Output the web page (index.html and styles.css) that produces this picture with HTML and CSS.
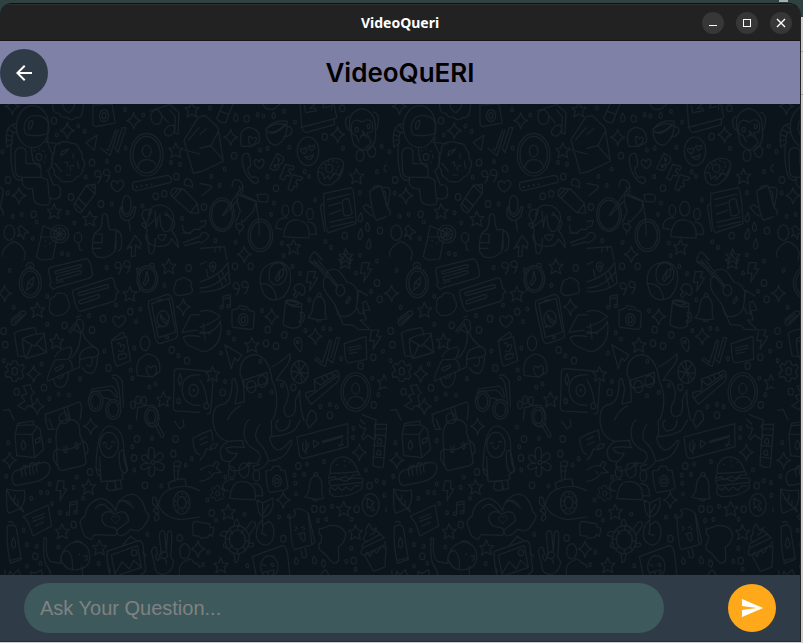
FILE: index.html
```html
<!DOCTYPE html>
<html lang="en">
<head>
<meta charset="utf-8">
<meta name="viewport" content="width=device-width, initial-scale=1">
<title>VideoQueri</title>
<link rel="stylesheet" href="styles.css">
</head>
<body>
<div class="window">
  <div class="titlebar">
    <span class="titlebar-name">VideoQueri</span>
    <div class="titlebar-controls">
      <button class="control" type="button" aria-label="Minimize"><svg width="22" height="22" viewBox="0 0 22 22" fill="none" stroke="#fff" shape-rendering="crispEdges"><path d="M7 13.5h8"/></svg></button>
      <button class="control" type="button" aria-label="Maximize"><svg width="22" height="22" viewBox="0 0 22 22" fill="none" stroke="#fff" shape-rendering="crispEdges"><path d="M7.500 7.500h7v7h-7z"/></svg></button>
      <button class="control" type="button" aria-label="Close"><svg width="22" height="22" viewBox="0 0 22 22" fill="none" stroke="#fff" stroke-width="1.400"><path d="M7 7l8 8M15 7l-8 8"/></svg></button>
    </div>
  </div>
  <header class="header">
    <button class="round back" type="button" aria-label="Back"><svg width="24" height="24" viewBox="0 0 24 24" fill="#fff"><path d="M20 11H7.830l5.590-5.590L12 4l-8 8 8 8 1.410-1.410L7.830 13H20v-2z"/></svg></button>
    <h1 class="heading">VideoQuERI</h1>
  </header>
  <main class="chat">
    <svg class="doodles" width="100%" height="100%" aria-hidden="true">
      <defs>
        <path id="star" d="M0-23L7-7 22-6 11 5 15 22 0 13-14 22-10 5-20-6-6-7Z"/>
        <path id="spark" d="M0-25Q3-5 21 0Q4 4 0 25Q-4 4-21 0Q-4-5 0-25Z"/>
        <path id="heart" d="M0 18C-27 4-20-19-7-15Q-2-13 0-8Q3-20 14-16C27-8 15 9 0 18Z"/>
        <path id="bolt" d="M-10-28L12-28 5-10 18-9-6 30-2 3-16 4Z"/>
        <g id="dot"><ellipse rx="8" ry="10"/></g>
        <g id="sdot"><ellipse rx="4" ry="6"/></g>
        <g id="note"><path d="M-8 16V-16L14-21V12M-8-8L14-13"/><ellipse cx="-13" cy="17" rx="5" ry="5"/><ellipse cx="9" cy="13" rx="5" ry="5"/></g>
        <g id="quote"><path d="M-8 18Q1 9-2-1Q-19 2-18-11Q-14-23-4-17Q9-6-8 18ZM18 14Q27 4 24-5Q8-2 8-14Q12-27 23-21Q35-9 18 14Z"/></g>
        <g id="people"><ellipse cx="0" cy="-34" rx="15" ry="22"/><ellipse cx="-37" cy="-28" rx="10" ry="17"/><ellipse cx="37" cy="-18" rx="10" ry="17"/><path d="M-42 50Q-38-5 0 0Q39 5 34 54Q-3 54-42 50ZM-46 28L-66 24Q-63-10-30-6M36 42L56 43Q56 5 29 6"/></g>
        <g id="person"><ellipse rx="49" ry="64"/><ellipse rx="41" ry="55"/><ellipse cy="-11" rx="13" ry="18"/><path d="M-27 39Q-23 15 0 15Q22 15 28 32"/></g>
        <g id="camera"><path d="M-34-24L-17-28-11-37 12-33 17-23 30-20Q34-18 33-10L30 29Q29 35 20 34L-29 28Q-35 27-34 18Z"/><ellipse cy="5" rx="14" ry="18"/><ellipse cy="5" rx="6" ry="9"/><path d="M-8-27L8-25"/></g>
        <g id="bell"><path d="M-32 31Q-18 19-18-3Q-15-31 2-33Q20-28 20 0Q18 22 24 35Q-3 41-32 31ZM-5-34Q-4-43 3-43Q9-40 7-32M-9 37Q1 49 9 38"/></g>
        <g id="gear"><path d="M-5-31H6L8-21 16-17 24-22 29-10 22-3 23 7 27 15 19 24 10 20 4 30-8 29-10 19-18 16-26 18-29 6-20 0-21-9-27-14-20-24-12-19Z"/><ellipse rx="8" ry="11"/></g>
        <pattern id="wallpaper" width="1161" height="1413" patternUnits="userSpaceOnUse" patternTransform="scale(.33333)">
          <g fill="none" stroke="#18222a" stroke-width="3.500" stroke-linejoin="round" stroke-linecap="round">
            <g transform="translate(0 -12)">
              <ellipse cx="98" cy="80" rx="49" ry="63"/><path d="M78 104C64 76 79 43 112 47Q141 50 145 72L143 101Q112 111 78 104ZM87 88Q82 64 98 61Q101 72 90 88"/>
              <path d="M50 71Q10 72 21 142L37 129Q33 91 51 97M34 131Q29 187 41 226Q55 249 66 237M22 105L34 109M21 121L36 120M26 89L40 97M37 75L46 86"/>
              <path d="M70 144Q43 138 45 171L47 218Q49 232 68 232H123V204L118 191H78V159Q79 148 70 144M95 141Q92 189 123 204M145 112Q136 126 159 163Q157 211 143 211L160 255Q184 250 182 281Q180 303 150 294M67 235V252Q75 268 97 266L102 301Q111 320 145 314Q154 305 147 289L143 240L123 231"/>
              <ellipse cx="117" cy="171" rx="8" ry="10"/><g stroke-dasharray="3 12"><ellipse cx="117" cy="171" rx="20" ry="25"/></g>
              <path d="M174 130Q195 120 215 130Q234 129 237 147Q249 158 246 174Q260 190 250 204Q247 226 230 231Q220 248 200 245Q184 249 179 235Q160 229 163 210Q151 199 157 184Q151 167 163 159Q161 139 174 130M135 126L180 132M185 154L206 147 195 159 183 167ZM165 190L184 214M199 225H212M195 188Q205 182 203 199M219 161L220 174M212 211Q206 193 222 198M232 184L236 205"/>
              <path d="M158 14Q157 42 178 40Q183 55 199 51Q214 67 227 52Q244 57 248 35L251 12M188 12Q191 32 207 38Q222 27 224 12M279 15L336 12 346 69 288 80Q278 79 279 67Z"/><ellipse cx="312" cy="47" rx="14" ry="18"/><ellipse cx="312" cy="47" rx="6" ry="9"/>
              <path d="M291 105L258 128 283 151ZM303 145L330 167 354 90M318 148L325 151 347 90M344 142L354 157 378 83 367 83 349 139"/>
              <use href="#person" x="440" y="164"/><use href="#quote" x="302" y="231"/><use href="#heart" x="352" y="258"/>
              <path d="M399 247L503 226Q518 230 512 247L408 273Q393 267 399 247Z"/><path stroke-dasharray="1 14" stroke-width="6" d="M410 261L458 252"/>
              <path d="M286 253L259 256 222 313Q223 333 242 339L286 280ZM259 256L284 281M235 294L259 318M226 310L247 334M272 255L285 267"/>
              <ellipse cx="380" cy="314" rx="13" ry="28"/><path d="M364 319Q355 333 362 349Q381 375 402 347L408 321 401 320Q397 348 380 350Q363 345 364 319M387 364L391 392"/>
              <path d="M450 33L514 12M452 45Q453 73 470 73Q487 73 485 45Q469 13 452 45ZM493 93Q494 110 508 108Q527 101 523 78Q506 69 493 93ZM485 46L505 68M514 18L537 38 534 102 524 99 526 51 510 30M597 50L552 120 580 220 600 215M553 150L600 162M566 119L597 83"/>
              <path d="M522 264L550 267 592 310 596 339 570 338 515 288Q508 275 522 264ZM534 267L517 287M546 267L525 292M592 311L572 337"/>
              <path d="M447 357Q442 316 480 315Q521 320 521 359Q529 376 514 393M448 329Q424 324 427 350L440 375Q426 364 425 375L442 389 437 412Q444 440 480 439Q511 439 514 416Q523 425 535 443Q536 421 517 394M441 405L448 459Q465 470 466 415M455 330L434 386 465 359M465 333L469 383 474 350M480 343Q478 380 494 395Q515 397 518 362L497 337M510 349L493 344M474 405L499 404Q492 433 474 413Z"/>
              <path d="M129 377L174 397 171 411H122ZM123 412L109 470Q115 477 126 480L158 477 171 411"/><circle cx="179" cy="402" r="27"/><circle cx="179" cy="402" r="18"/><path d="M179 382V421M161 402H198M166 389L193 415M193 389L166 415M135 422L137 424M149 431L151 429M134 438L136 440M157 423L159 424"/>
              <ellipse cx="234" cy="413" rx="11" ry="15"/><path d="M235 428L240 450H247M283 460Q274 459 279 418Q282 395 300 388Q308 370 307 347Q316 334 323 351Q324 378 330 389H349L344 455Q319 480 289 470ZM279 428H306V402H285M280 445H302M351 392Q366 397 365 423Q366 453 353 453M348 396V447"/>
              <ellipse cx="28" cy="398" rx="16" ry="23"/><path d="M8 469Q2 447 40 424Q66 430 76 459L72 480M381 447L405 406 423 429 419 446 407 435 405 468 394 470 395 438ZM548 376Q546 389 553 395Q565 406 582 388H600M550 428L600 410M554 437L600 425M547 399L573 400M0 262Q10 262 9 280L1 323Q12 330 9 345"/>
              <use href="#spark" x="37" y="19"/><use href="#spark" x="202" y="92" /><use href="#spark" x="401" y="62"/><use href="#spark" x="57" y="287"/><use href="#star" x="162" y="334"/><use href="#star" x="269" y="356"/><use href="#star" x="527" y="151"/><use href="#star" x="575" y="29"/>
              <path d="M64 376L73 387 86 397 73 400 71 418 62 404 52 410 60 396 53 385ZM559 236Q581 237 577 263Q568 256 554 255Q551 242 559 236"/>
              <use href="#dot" x="162" y="62"/><use href="#dot" x="24" y="240"/><use href="#dot" x="276" y="188"/><use href="#dot" x="354" y="206"/><use href="#dot" x="213" y="291"/><use href="#dot" x="303" y="312"/><use href="#dot" x="101" y="343"/><use href="#dot" x="467" y="289"/><use href="#dot" x="493" y="281"/><use href="#dot" x="529" y="230"/><use href="#sdot" x="254" y="94"/><use href="#sdot" x="235" y="78"/><use href="#sdot" x="170" y="105"/><use href="#sdot" x="375" y="29"/><use href="#sdot" x="430" y="45"/><use href="#sdot" x="321" y="184"/><use href="#sdot" x="257" y="231"/><use href="#sdot" x="23" y="279"/><use href="#sdot" x="65" y="343"/><use href="#sdot" x="38" y="349"/><use href="#sdot" x="203" y="338"/><use href="#sdot" x="110" y="366"/><use href="#sdot" x="223" y="369"/><use href="#sdot" x="186" y="460"/><use href="#sdot" x="204" y="463"/><use href="#sdot" x="98" y="415"/><use href="#sdot" x="427" y="318"/><use href="#sdot" x="513" y="187"/><use href="#sdot" x="540" y="193"/><use href="#sdot" x="377" y="144"/><use href="#sdot" x="335" y="312"/><use href="#sdot" x="7" y="155"/><use href="#sdot" x="546" y="355"/>
            </g>
            <g transform="translate(600 -12)">
              <path d="M0 50L16 47 54 83 70 184 0 217M0 145L32 137 68 178M54 95L32 139M0 104L20 86M69 12L50 55Q63 72 77 67L99 12M61 34L86 43M188 12Q199 35 224 26L239 12"/>
              <path d="M125 139Q112 88 147 82Q183 87 178 127L155 139ZM146 110Q153 107 157 116Q167 107 169 117Q169 128 154 138Q144 126 146 110"/>
              <path d="M198 87Q224 57 261 64Q265 116 230 136Q198 134 198 87ZM198 87Q214 118 260 72M260 80Q277 78 276 93Q271 111 252 110M203 84Q230 65 254 73Q239 95 205 98"/>
              <path d="M300 12L305 79Q309 98 320 97L403 74V58L410 52 402 12M303 82L405 56M313 17L317 38 350 32 346 24 330 26 344 12M371 12L368 24 389 19M396 12L394 29"/>
              <path d="M451 91Q438 37 485 25Q528 34 526 87Q532 132 505 149Q482 155 461 132ZM447 48Q428 58 443 88L451 91M520 36Q545 42 530 88M455 72Q466 52 486 67Q507 51 516 68Q521 84 514 96L500 99 514 128 495 145M455 72Q448 100 470 109L477 126M481 113Q484 101 492 108L487 92 501 112"/><ellipse cx="470" cy="89" rx="5" ry="7"/><ellipse cx="506" cy="79" rx="4" ry="7"/><ellipse cx="480" cy="167" rx="12" ry="17"/><ellipse cx="515" cy="155" rx="12" ry="17"/>
              <ellipse cx="324" cy="154" rx="32" ry="43"/><path d="M313 162Q294 151 305 145L311 149 318 142Q325 151 313 162ZM335 152Q320 141 329 136L335 140 342 135Q348 143 335 152ZM314 170Q328 172 340 164Q334 190 314 170"/>
              <path d="M145 161Q125 154 127 187Q136 237 168 252L176 243Q174 225 155 233Q134 204 151 199Q154 179 145 161M178 206Q154 190 166 179Q174 177 176 186Q188 169 192 186Q192 198 178 206Z"/>
              <path d="M231 160L209 204Q229 220 238 200L232 192Q251 197 251 172ZM232 173L240 178 235 185ZM222 194L230 197 225 204ZM257 193L239 235 251 241 259 225 268 229 273 218 264 214 269 206 279 210 283 200ZM278 224L264 266 275 273 282 258 289 261 293 252 287 248 292 238 303 241 309 233Z"/>
              <path d="M353 221Q354 186 400 175Q430 174 431 194Q430 229 397 251Q371 263 357 242ZM353 219Q370 210 372 237L385 227 388 239 406 219 417 226 430 201"/><ellipse cx="388" cy="205" rx="11" ry="12"/><path stroke-dasharray="4 10" d="M365 206Q387 168 418 192Q410 218 390 227"/>
              <ellipse cx="66" cy="344" rx="37" ry="50"/><ellipse cx="66" cy="344" rx="31" ry="43"/><ellipse cx="181" cy="406" rx="37" ry="49"/><ellipse cx="181" cy="406" rx="30" ry="41"/><path d="M67 345L115 276 130 259M115 276Q106 306 121 333L107 367M114 284L158 301 168 306 162 331 128 367M118 260L123 281 169 304Q168 329 175 350L178 405M70 347L109 305M97 260Q95 243 105 239Q119 238 127 253L129 277M171 284L197 282Q210 284 202 306L176 304ZM111 371Q102 378 115 390 123 399 131 381 127 370 111 371M121 392L117 403M125 369V360"/>
              <use href="#people" x="293" y="360"/>
              <path d="M371 281L454 263Q464 268 468 371L386 398Q372 392 371 281ZM371 311Q360 314 362 326L374 394M382 299L450 282M386 318L421 308M388 343L423 330M390 367L460 351M391 381L462 365M426 307Q429 296 446 296L457 340Q442 352 432 345Z"/>
              <path d="M509 272L543 257 569 346 530 361Q518 350 509 272ZM511 323Q498 307 489 322 506 343 518 349M545 264Q577 254 568 298L558 315M548 274Q560 270 557 301M516 270Q525 250 544 260"/>
              <path d="M0 250L32 257Q36 261 31 267L6 287M0 365L19 361 15 377 0 383M0 406Q13 389 25 405 28 416 2 430M0 445L73 440 81 480M45 445V456M61 440V452M329 480Q334 459 344 455L367 480M483 338Q467 363 481 366Q493 358 483 338ZM483 386Q466 414 481 418Q493 408 483 386ZM501 367Q490 391 505 394Q514 384 501 367ZM507 416Q492 443 506 447Q518 440 507 416ZM107 39Q94 61 107 66Q122 61 107 39ZM221 36Q210 54 222 56Q230 48 221 36Z"/>
              <use href="#spark" x="92" y="112"/><use href="#spark" x="413" y="104"/><use href="#spark" x="133" y="463"/><use href="#star" x="469" y="229"/><use href="#star" x="280" y="441"/><use href="#star" x="437" y="469"/>
              <use href="#dot" x="140" y="56"/><use href="#dot" x="102" y="167"/><use href="#dot" x="374" y="110"/><use href="#dot" x="228" y="265"/><use href="#dot" x="12" y="321"/><use href="#dot" x="540" y="392"/><use href="#dot" x="434" y="407"/><use href="#dot" x="427" y="25"/><use href="#sdot" x="190" y="48"/><use href="#sdot" x="173" y="44"/><use href="#sdot" x="252" y="34"/><use href="#sdot" x="285" y="66"/><use href="#sdot" x="30" y="24"/><use href="#sdot" x="180" y="150"/><use href="#sdot" x="203" y="145"/><use href="#sdot" x="268" y="142"/><use href="#sdot" x="74" y="207"/><use href="#sdot" x="34" y="229"/><use href="#sdot" x="59" y="256"/><use href="#sdot" x="202" y="230"/><use href="#sdot" x="314" y="215"/><use href="#sdot" x="327" y="229"/><use href="#sdot" x="545" y="138"/><use href="#sdot" x="531" y="215"/><use href="#sdot" x="480" y="278"/><use href="#sdot" x="345" y="300"/><use href="#sdot" x="222" y="309"/><use href="#sdot" x="213" y="343"/><use href="#sdot" x="107" y="426"/><use href="#sdot" x="246" y="429"/><use href="#sdot" x="376" y="425"/><use href="#sdot" x="393" y="442"/><use href="#sdot" x="480" y="465"/><use href="#sdot" x="46" y="422"/><use href="#sdot" x="429" y="145"/><use href="#sdot" x="251" y="467"/><use href="#dot" x="560" y="205"/>
            </g>
            <g transform="translate(0 468)">
              <ellipse cx="91" cy="69" rx="33" ry="44"/><ellipse cx="91" cy="69" rx="26" ry="36"/><path d="M79 28Q75 8 91 7Q104 9 100 26M86 25Q86 16 92 18L96 25M101 51L98 76 80 91 84 67ZM84 67L98 76M151 22L260-4Q272-1 278 43Q277 51 263 56L169 83 159 88 149 76Q149 69 154 67L146 36Q144 26 151 22ZM165 34L239 14Q247 14 243 22L167 42ZM169 51L238 32Q247 34 242 41L171 62ZM169 69L190 63"/>
              <path d="M224 89L334 53Q343 55 346 83L357 96 348 101Q351 119 340 124L240 154Q229 154 218 98Q217 91 224 89ZM236 98L320 74Q328 75 325 83L239 107Q230 104 236 98ZM239 122L295 103Q302 105 298 113L242 132Q234 129 239 122Z"/>
              <use href="#quote" x="363" y="25"/><ellipse cx="442" cy="57" rx="31" ry="40"/><ellipse cx="442" cy="57" rx="25" ry="33"/><path d="M441 33L446 58 434 76Q425 72 435 59ZM416 43Q405 33 413 23L423 30M450 16Q450 6 462 12L463 21 454 22M419 86L417 96"/>
              <path d="M159 164Q141 153 150 133Q145 113 164 110Q166 97 184 99Q203 101 202 117Q214 132 204 150Q184 174 159 164ZM524 99Q518 85 526 74Q526 58 540 58Q549 48 562 58Q579 64 573 77Q582 93 572 100L543 107Q529 108 524 99Z"/>
              <path d="M34 178L65 154Q78 149 77 162L45 195Q33 200 34 184L65 162M42 189L69 167"/>
              <path d="M43 221Q45 212 104 203L111 224M43 221L54 288 73 289M67 237Q89 224 132 219L140 277 78 296Q68 279 67 237ZM68 239L103 259 134 224M79 292L96 255M110 254L138 276"/>
              <use href="#gear" x="44" y="334"/>
              <path d="M206 214L235 177Q252 177 251 205L242 220 219 207M211 219L231 193M231 190L243 219M230 172L242 167M249 218Q251 237 279 259Q298 265 296 283Q285 296 270 291L239 299V321L144 363Q136 358 165 300L205 297Q220 310 216 328M242 219Q242 268 214 294M165 291Q171 269 209 261Q219 267 213 280L206 296M239 299Q235 265 280 260M248 323Q258 342 276 340Q290 333 293 291M260 315Q278 327 277 295M161 359Q165 383 185 382Q203 376 206 336M174 354Q190 358 192 341M165 325L190 314Q194 318 186 324L171 333Q164 333 165 325"/>
              <path d="M334 243L379 230 392 302 351 319Q343 315 334 243ZM335 240L367 217Q375 218 372 228M353 251Q361 244 362 260Q374 246 374 262Q367 282 355 272M358 284L375 280Q384 283 376 294L359 299Q350 293 358 284"/>
              <path d="M446 123L502 103Q513 104 517 120L533 225Q533 233 522 237L480 251Q472 251 467 237L445 138ZM455 131L507 115 527 216 475 233ZM472 122L484 118"/><ellipse cx="489" cy="176" rx="18" ry="24"/><path d="M478 197L474 202 483 199M482 164Q478 176 496 190Q509 184 493 178Q481 164 482 164"/><ellipse cx="501" cy="232" rx="5" ry="4"/>
              <path d="M412 347Q402 296 443 282Q484 285 479 337L455 351ZM440 324Q442 311 453 324Q465 310 469 324Q473 343 455 352Q436 339 440 324"/>
              <path d="M523 337Q522 326 536 326L600 331M523 337L520 441Q520 452 530 453L600 457M600 345Q550 340 546 384Q547 438 600 436"/><ellipse cx="581" cy="391" rx="14" ry="18"/><circle cx="581" cy="391" r="2"/><path d="M540 341L534 361 540 376 546 358Z"/><ellipse cx="536" cy="423" rx="5" ry="8"/>
              <path d="M600 164L572 165 546 217 592 210M550 231Q570 223 600 230M550 231Q554 258 600 270"/>
              <ellipse cx="287" cy="424" rx="22" ry="30"/><ellipse cx="287" cy="424" rx="15" ry="22"/><ellipse cx="340" cy="448" rx="23" ry="30"/><ellipse cx="340" cy="448" rx="16" ry="22"/><path d="M265 424L276 387 335 378Q351 383 352 413M279 394L327 390Q338 393 347 412M308 414L322 415 336 420M337 347Q350 338 367 364L370 440M337 353Q358 352 361 434"/>
              <path d="M70 378L90 374 94 389 103 397 93 407 98 437 82 438 76 449 53 437 75 423 63 407 81 402ZM11 451L27 448 42 480M135 463L239 426Q249 434 240 480M135 463L139 480M202 442L211 480M192 445L201 480"/><ellipse cx="192" cy="475" rx="15" ry="16"/>
              <ellipse cx="399" cy="434" rx="7" ry="11"/><ellipse cx="414" cy="420" rx="7" ry="12"/><ellipse cx="432" cy="422" rx="7" ry="12"/><path d="M409 480L413 443Q435 435 459 436Q477 446 477 480"/><ellipse cx="454" cy="470" rx="20" ry="29"/><ellipse cx="454" cy="470" rx="13" ry="21"/>
              <use href="#spark" x="14" y="100"/><use href="#spark" x="101" y="342"/><use href="#spark" x="550" y="141"/><use href="#spark" x="112" y="439"/><use href="#star" x="112" y="150"/><use href="#star" x="169" y="244"/><use href="#star" x="389" y="102"/><use href="#star" x="506" y="19"/><use href="#star" x="490" y="418"/><use href="#heart" x="357" y="184"/>
              <use href="#dot" x="194" y="196"/><use href="#dot" x="276" y="210"/><use href="#dot" x="309" y="176"/><use href="#dot" x="325" y="324"/><use href="#dot" x="391" y="155"/><use href="#dot" x="132" y="383"/><use href="#dot" x="11" y="213"/><use href="#dot" x="16" y="254"/><use href="#dot" x="561" y="302"/><use href="#dot" x="515" y="270"/><use href="#dot" x="566" y="24"/><use href="#dot" x="50" y="395"/><ellipse cx="435" cy="250" rx="14" ry="22"/><use href="#sdot" x="29" y="31"/><use href="#sdot" x="41" y="142"/><use href="#sdot" x="142" y="109"/><use href="#sdot" x="142" y="193"/><use href="#sdot" x="267" y="167"/><use href="#sdot" x="348" y="135"/><use href="#sdot" x="408" y="185"/><use href="#sdot" x="421" y="147"/><use href="#sdot" x="403" y="264"/><use href="#sdot" x="313" y="273"/><use href="#sdot" x="125" y="312"/><use href="#sdot" x="11" y="302"/><use href="#sdot" x="240" y="356"/><use href="#sdot" x="207" y="405"/><use href="#sdot" x="176" y="402"/><use href="#sdot" x="148" y="416"/><use href="#sdot" x="397" y="355"/><use href="#sdot" x="392" y="330"/><use href="#sdot" x="448" y="381"/><use href="#sdot" x="467" y="372"/><use href="#sdot" x="535" y="287"/><use href="#sdot" x="493" y="76"/><use href="#sdot" x="320" y="23"/>
            </g>
            <g transform="translate(600 468)">
              <path d="M0 66Q61 46 83 8L90 69Q59 96 0 96M0 84Q50 82 84 37M55 44L68 79M66 33L79 66M0 13L19 5M19 28L25 57M39 36Q24 24 29 12Q42 0 48 14Q47 27 39 36"/><circle cx="38" cy="20" r="4"/>
              <path d="M181 71Q177 18 218 9Q251-3 270 31Q279 79 250 111Q213 132 190 101ZM181 71Q223 67 230 118M207 45Q207 8 237 8Q261 14 261 44Q252 77 229 75Q207 72 207 45M226 56L240 32 252 25 249 46 232 64ZM240 32L236 60"/>
              <path d="M281 87Q286 71 301 71Q317 78 315 96Q312 108 303 105L298 97 286 114 280 105 289 96ZM328 4L356 24 379 54 381 34Q406 19 424 40L441 66Q471 72 475 105L468 149Q443 180 415 165L405 134 379 99Q366 78 372 54M342 0L411 81M334 4L350 13M355 0L412 75M405 134L429 193 460 196 474 208 510 209 481 180H499L491 151 510 150 498 124 488 127 490 162 477 159 473 144M471 114L476 91 503 107"/><ellipse cx="421" cy="91" rx="13" ry="17"/><path d="M437 128L448 110 452 116 442 132Z"/>
              <use href="#quote" x="117" y="87"/><use href="#note" x="77" y="125"/><use href="#camera" x="130" y="174"/><use href="#bell" x="356" y="142"/>
              <path d="M257 121Q282 115 306 132L301 197Q277 214 249 193ZM258 127Q276 145 304 139M262 123Q279 121 297 131Q281 140 262 130ZM299 158Q315 153 313 172Q311 192 297 186M300 166Q307 165 306 175L299 181"/>
              <path d="M0 155Q30 142 61 170Q39 189 0 202M0 220Q45 221 61 183Q72 250 20 274L0 273M10 191L15 238M0 215L32 220"/>
              <path d="M74 254L126 285 113 303 104 294 94 326ZM345 299L351 293 367 308 389 240Q396 240 394 249L376 319 366 315ZM384 298L398 309 419 233H409L393 293"/>
              <path d="M282 243Q283 230 297 233Q313 241 302 276Q283 259 282 243ZM433 251L498 229 500 298 444 309Q434 304 433 251ZM444 264L482 256M446 272L484 264M448 281L472 276"/><circle cx="293" cy="246" r="4"/>
              <path d="M133 425Q133 364 120 342Q120 284 170 284Q208 295 216 360Q243 417 219 480M130 361L202 337 203 369 142 385Q133 386 130 361M216 320Q238 311 270 281Q276 303 246 334L228 361M133 425L105 432 113 387 105 355 96 360Q98 425 68 433Q38 436 39 480M82 480Q97 448 122 437M228 361Q256 353 263 388Q270 414 253 439Q249 480 278 466Q290 455 286 420L300 390Q297 430 311 480"/><ellipse cx="154" cy="380" rx="14" ry="18"/><ellipse cx="187" cy="364" rx="13" ry="18"/>
              <ellipse cx="299" cy="336" rx="26" ry="34"/><path d="M282 311L317 360M282 359L316 311M295 302L306 369M275 334L322 340"/>
              <path d="M343 358L411 331Q423 341 414 364L334 433 317 409 317 398 345 391ZM321 414L413 348M345 363L362 376 410 342M363 350L373 363M378 346L386 359M394 338L402 350"/>
              <g transform="translate(467 396) scale(.9)"><use href="#person"/></g><use href="#bolt" x="335" y="63"/><use href="#bolt" x="497" y="36"/><use href="#bolt" x="525" y="238"/>
              <use href="#spark" x="215" y="170"/><use href="#spark" x="346" y="229"/><use href="#spark" x="574" y="100"/><use href="#star" x="155" y="255"/><use href="#star" x="37" y="342"/><use href="#star" x="552" y="367"/><use href="#star" x="435" y="4"/>
              <path d="M0 332L33 334M39 361L32 455Q31 462 20 462M0 360Q18 388 22 430M322 480Q322 455 336 451Q349 453 350 480M487 464L528 480M576 452L600 449"/><ellipse cx="19" cy="438" rx="7" ry="9"/>
              <use href="#dot" x="152" y="19"/><use href="#dot" x="105" y="19"/><use href="#dot" x="203" y="209"/><use href="#dot" x="253" y="225"/><use href="#dot" x="228" y="258"/><use href="#dot" x="198" y="250"/><use href="#dot" x="531" y="69"/><use href="#dot" x="539" y="118"/><use href="#dot" x="570" y="214"/><use href="#dot" x="520" y="292"/><use href="#dot" x="482" y="318"/><use href="#dot" x="280" y="382"/><use href="#dot" x="68" y="397"/><use href="#dot" x="521" y="435"/><use href="#dot" x="390" y="466"/><use href="#sdot" x="277" y="19"/><use href="#sdot" x="300" y="41"/><use href="#sdot" x="328" y="119"/><use href="#sdot" x="186" y="152"/><use href="#sdot" x="86" y="218"/><use href="#sdot" x="102" y="237"/><use href="#sdot" x="316" y="212"/><use href="#sdot" x="370" y="205"/><use href="#sdot" x="391" y="207"/><use href="#sdot" x="423" y="296"/><use href="#sdot" x="75" y="364"/><use href="#sdot" x="63" y="279"/><use href="#sdot" x="361" y="440"/><use href="#sdot" x="390" y="433"/><use href="#sdot" x="410" y="440"/><use href="#sdot" x="517" y="354"/><use href="#sdot" x="535" y="404"/><use href="#sdot" x="549" y="273"/><use href="#sdot" x="513" y="94"/><use href="#sdot" x="531" y="3"/><use href="#sdot" x="468" y="39"/><use href="#sdot" x="180" y="407"/><use href="#sdot" x="215" y="397"/><use href="#sdot" x="181" y="304"/><use href="#sdot" x="246" y="376"/>
            </g>
            <g transform="translate(0 948)">
              <path d="M53 10L99 3 101 15M53 10L45 45 50 107 104 113 131 88 120 27 101 14 50 17M45 42L96 43 104 112M96 43L112 19M70 60Q57 83 70 89Q84 79 70 60ZM106 59L120 52V64L107 71Z"/>
              <path d="M171 92Q157 0 205-2Q244-1 239 41L248 62 258 124Q260 130 250 136L185 152Q168 149 171 92ZM170 86Q200 99 244 69M171 90Q158 87 161 119L171 136M245 61Q265 66 264 96L255 106M192 80V97H200V77M224 69L228 87 235 84 230 66M135-2L145 28 164 28M148-2L158 25"/>
              <path d="M288 145Q290 20 330 18Q374 26 371 93L383 152 365 166Q375 182 360 180L304 185Q298 168 302 155ZM299 111L303 184M358 97Q356 167 379 157L380 145Q370 123 371 93Q363 88 358 97M291 106Q282 165 301 168M319 206L324 185 344 183 350 209 365 205 361 180M320 203Q323 216 348 209M346 188V207"/><ellipse cx="327" cy="75" rx="28" ry="38"/><path d="M309 72Q314 63 319 71M334 66Q340 61 344 68M317 79Q326 95 336 77"/>
              <path d="M447 119Q439 80 456 82Q467 84 462 115Q478 89 488 102Q496 117 469 126Q496 130 492 145Q482 161 463 139Q468 165 454 171Q441 166 450 140Q428 156 422 142Q422 127 447 131Q419 119 426 107Q439 99 447 119Z"/><circle cx="459" cy="127" r="6"/>
              <path d="M38 185Q30 154 59 148L129 127Q151 126 150 148Q146 173 111 184L53 196Q39 196 38 185ZM67 169Q58 142 75 136M78 166Q70 135 83 136M91 164Q83 131 98 128M102 161Q93 133 107 128M111 156Q106 125 119 126"/>
              <path d="M20 207Q51 216 73 210Q78 245 64 261L71 276 59 266 27 280Q18 273 20 207ZM20 207Q34 247 64 266M31 235L44 240 45 225M43 252L54 255V241"/>
              <path d="M70 289L144 255 155 318 99 348 85 308ZM98 295L131 281M99 304L133 291M105 319L130 306"/>
              <path d="M174 182L192 183 191 206 200 207 180 242 182 212 168 211Z"/><use href="#note" x="217" y="264"/>
              <path d="M240 309Q243 293 255 289Q260 247 299 236Q313 231 338 257L347 273Q352 228 398 222Q428 230 437 275Q452 284 445 296Q429 330 412 333L391 328Q374 350 357 347Q344 335 358 325L386 303Q385 276 364 275L343 282Q325 268 309 282Q298 304 320 318L347 325Q355 337 346 346L282 344 275 358Q260 356 251 344ZM286 265Q300 248 314 255L338 276M354 250Q373 230 395 253M401 263L368 240"/>
              <use href="#heart" transform="translate(347 298) scale(.65)"/>
              <path d="M475 253Q486 195 568 200L600 212M475 253Q488 293 545 299L600 291M509 208L504 190Q532 174 555 177L558 198M524 184L521 130Q522 124 534 123L543 127 537 140 533 177M522 139L541 139M522 153L537 153M458 239Q454 229 466 232Q474 245 471 262Q453 253 458 239ZM459 272Q471 257 476 272L475 283Q465 276 459 272M471 281Q486 297 466 303Q459 293 471 281"/><ellipse cx="545" cy="248" rx="25" ry="34"/><ellipse cx="545" cy="248" rx="13" ry="18"/><ellipse cx="545" cy="248" rx="19" ry="26" stroke-dasharray="3 12"/>
              <path d="M22 319Q46 309 49 325L64 418 31 430Q19 382 22 319ZM26 307Q31 300 40 309M29 422L61 414M40 352Q28 380 41 384Q54 377 40 352Z"/>
              <path d="M133 353Q137 351 140 358Q135 415 153 425L182 430Q183 377 226 366Q266 367 269 407Q272 449 218 450Q189 444 182 414Q187 391 203 392Q220 406 217 449M133 353Q127 415 140 437Q156 456 151 480M246 439L249 480M218 369Q237 354 251 374M251 409L261 406M255 420Q263 424 261 407M238 401V405"/>
              <path d="M321 394L415 362Q427 362 429 377L437 450Q435 459 401 480M321 394Q319 425 333 480M334 405L412 377 424 442 346 469ZM344 464L366 425 388 447 401 421 422 440M366 378L391 349 408 361M322 401Q319 431 331 456M428 397L439 408"/><ellipse cx="402" cy="398" rx="8" ry="9"/>
              <path d="M484 405L478 347Q479 332 488 332Q496 334 495 350L499 396 502 345Q504 330 513 333Q518 339 512 410L521 426Q517 453 497 462Q465 468 464 434L454 395Q458 379 468 382L473 405M479 412Q477 394 499 396Q509 409 494 416L479 412M493 416Q502 425 499 431M467 404Q471 435 479 412"/>
              <path d="M541 480Q528 430 563 420Q573 412 582 428Q600 433 600 444M440 8L453 20Q474 23 476 8M466 17L483 49Q491 57 492 45L474 12M524 4L540 27 552 18 549-1M600 44L580 54Q575 68 589 98L600 104M578 315Q577 304 591 304L600 307M578 315L579 346 600 349M14 451L17 480M22 480L30 453 38 466 55 449 66 480M93 468L92 455 106 460 124 449 130 480"/>
              <use href="#spark" x="29" y="121"/><use href="#spark" x="272" y="19"/><use href="#star" x="265" y="201"/><use href="#star" x="186" y="334"/><use href="#star" x="298" y="383"/><use href="#spark" x="594" y="387"/>
              <use href="#dot" x="270" y="156"/><use href="#dot" x="411" y="57"/><use href="#dot" x="402" y="114"/><use href="#dot" x="435" y="196"/><use href="#dot" x="527" y="57"/><use href="#dot" x="520" y="101"/><use href="#dot" x="106" y="409"/><use href="#dot" x="221" y="314"/><use href="#dot" x="539" y="354"/><ellipse cx="554" cy="394" rx="15" ry="23"/><use href="#sdot" x="25" y="68"/><use href="#sdot" x="149" y="62"/><use href="#sdot" x="19" y="169"/><use href="#sdot" x="94" y="235"/><use href="#sdot" x="123" y="217"/><use href="#sdot" x="142" y="218"/><use href="#sdot" x="149" y="192"/><use href="#sdot" x="156" y="251"/><use href="#sdot" x="180" y="278"/><use href="#sdot" x="221" y="202"/><use href="#sdot" x="249" y="234"/><use href="#sdot" x="230" y="171"/><use href="#sdot" x="71" y="331"/><use href="#sdot" x="81" y="374"/><use href="#sdot" x="110" y="379"/><use href="#sdot" x="81" y="438"/><use href="#sdot" x="121" y="430"/><use href="#sdot" x="175" y="381"/><use href="#sdot" x="296" y="431"/><use href="#sdot" x="397" y="80"/><use href="#sdot" x="403" y="150"/><use href="#sdot" x="484" y="198"/><use href="#sdot" x="557" y="135"/><use href="#sdot" x="575" y="116"/><use href="#sdot" x="442" y="343"/><use href="#sdot" x="456" y="55"/><use href="#sdot" x="390" y="21"/>
            </g>
            <g transform="translate(600 948)">
              <path d="M39 0Q42 53 84 64L128 61Q128 76 134 83 101 78 78 84Q84 103 112 100 104 117 89 126Q83 145 97 152Q132 155 145 130L172 129Q190 108 171 93Q134 77 132 43Q133 5 148 0M84 64Q54 83 62 107Q65 126 91 125M180 12Q159 43 171 62Q199 87 206 123Q251 121 266 88Q282 58 271 61Q249 92 231 90Q211 78 209 50Q257 49 284 30L302 0M235 0Q217 14 239 33Q270 32 270 0M214 0L215 48M206 123Q187 151 164 152L159 138 179 133M316 0L327 24 349 0"/>
              <path d="M291 51L443 11 444 80 312 115Q299 117 296 93ZM309 67Q305 90 314 95 326 84 324 70M318 59V101M340 61L341 84 357 70ZM367 64L428 47M367 68L428 51M414 72L420 80 428 59M423 72L431 75"/>
              <path d="M480-2L494 12M478 14Q482 27 497 24L491 43Q480 51 490 59L503 45 523 59Q530 56 527 45M528-2L519 135Q532 145 550 141L560 14M525 13H563Q570 18 563 27H527Q521 20 525 13M524 44L557 47M519 76L556 79M517 111L553 114M532 69Q533 55 541 55Q547 62 544 72ZM530 103Q531 89 539 90Q544 97 541 106Z"/>
              <use href="#people" x="132" y="185"/><use href="#gear" transform="translate(53 220) scale(.75)"/>
              <path d="M197 153L214 150 220 139 238 138 243 151 255 151 264 200Q264 207 253 210L211 218Q202 218 197 153Z"/><ellipse cx="231" cy="183" rx="13" ry="17"/><ellipse cx="231" cy="183" rx="6" ry="8"/><use href="#bell" x="346" y="200"/>
              <path d="M391 160Q387 121 421 111Q457 107 474 154Q445 159 391 160ZM389 163L385 175 405 170 410 179 436 169 446 177 460 165 480 165 474 155M387 182Q385 198 399 197L484 187Q495 182 484 174L456 175 438 184 413 176ZM391 201Q382 223 402 229Q452 233 486 206L487 187M391 201L405 211 414 201 426 212 438 201 452 211 466 197 480 198M410 134H412M432 122L434 124M448 127H450M434 139L435 137"/>
              <ellipse cx="512" cy="255" rx="25" ry="34"/><path d="M501 234L522 247 515 254 523 270 516 273 508 259 502 265Z"/>
              <path d="M171 240L188 249 219 234 219 258Q207 292 187 291Q173 280 171 240ZM188 250V319M188 283L206 254M187 300Q167 318 169 350Q178 377 201 375Q220 368 222 340Q221 309 206 304L190 315 185 341 200 346"/>
              <ellipse cx="112" cy="359" rx="36" ry="42"/><ellipse cx="112" cy="359" rx="24" ry="29"/><path d="M103 317Q102 297 112 298L120 319M140 325L153 306Q169 302 166 317L148 345M77 350L61 346Q61 329 86 336M80 383Q64 384 73 368M144 369L161 370Q165 382 144 380M102 400L105 427Q115 431 117 400M91 330L98 343M131 328L124 341M78 357H90M134 361L147 365M87 388L97 377M129 379L137 391M113 318V330M112 388V401"/>
              <path d="M270 301Q266 292 282 291L287 280 281 271Q299 258 325 280L344 363Q346 372 333 375L284 389Q275 388 270 301ZM324 280L336 373M303 392L307 411Q317 419 320 406L315 385M286 320L292 325 285 331M304 323L313 319M310 329L316 326M294 343L313 337 316 359Q305 370 301 345"/>
              <path d="M358 325Q369 328 386 317Q424 311 437 340Q436 369 415 382L416 421Q405 439 388 418Q374 397 363 394Q349 378 363 366L365 348Q355 343 358 325Z"/>
              <path d="M499 341Q495 325 507 311L518 331 529 323Q530 336 512 345M498 341Q482 363 502 364L542 342 524 329M502 364Q482 370 488 384L553 353 540 343M488 384L483 395Q483 407 494 405L552 376 557 364M494 405L520 454 555 441 558 376M496 407L501 397 510 410 520 390 530 399 545 378 554 383"/>
              <path d="M157 410L248 376Q258 378 263 404L271 480M157 410L171 480"/><ellipse cx="208" cy="440" rx="26" ry="33"/><path d="M188 433L197 438M213 432Q221 424 222 438Q217 443 213 432M191 457L221 450Q226 472 191 469M203 456L206 467"/>
              <path d="M0 120L12 106 19 87 35 90 30 80 40 72 53 72 45 85 32 85M0 43L34 30 39 62M0 60L20 49M0 75L22 65M0 150Q28 131 40 139L46 124 57 130 49 145 64 157 42 159Q28 182 0 184M27 155L31 160M0 307L28 311 31 322 42 324 37 349 29 343 23 352 0 355M600 202L580 208 583 268 600 262M600 313Q580 312 578 340L590 400 600 399M363 465Q368 451 378 450L387 465M288 412Q279 430 290 434Q302 425 288 412ZM341 409Q332 428 345 432Q356 425 341 409ZM369 418Q359 435 372 441Q383 429 369 418Z"/>
              <use href="#spark" x="250" y="240"/><use href="#spark" x="478" y="97"/><use href="#star" x="84" y="276"/><use href="#star" x="431" y="267"/><use href="#star" x="466" y="337"/><use href="#star" x="62" y="436"/>
              <use href="#dot" x="343" y="267"/><use href="#dot" x="368" y="268"/><use href="#dot" x="470" y="268"/><use href="#dot" x="295" y="138"/><use href="#dot" x="509" y="197"/><use href="#dot" x="35" y="279"/><use href="#dot" x="250" y="356"/><use href="#dot" x="461" y="422"/><use href="#sdot" x="147" y="132"/><use href="#sdot" x="76" y="171"/><use href="#sdot" x="284" y="165"/><use href="#sdot" x="286" y="190"/><use href="#sdot" x="288" y="222"/><use href="#sdot" x="372" y="125"/><use href="#sdot" x="312" y="163"/><use href="#sdot" x="321" y="132"/><use href="#sdot" x="498" y="150"/><use href="#sdot" x="530" y="182"/><use href="#sdot" x="552" y="188"/><use href="#sdot" x="553" y="226"/><use href="#sdot" x="396" y="259"/><use href="#sdot" x="379" y="298"/><use href="#sdot" x="354" y="302"/><use href="#sdot" x="455" y="298"/><use href="#sdot" x="267" y="289"/><use href="#sdot" x="237" y="291"/><use href="#sdot" x="133" y="282"/><use href="#sdot" x="22" y="240"/><use href="#sdot" x="48" y="300"/><use href="#sdot" x="9" y="434"/><use href="#sdot" x="25" y="397"/><use href="#sdot" x="142" y="437"/><use href="#sdot" x="454" y="385"/><use href="#sdot" x="439" y="424"/><use href="#sdot" x="459" y="52"/><use href="#sdot" x="460" y="25"/><use href="#sdot" x="561" y="269"/><use href="#sdot" x="467" y="448"/>
            </g>
          </g>
        </pattern>
      </defs>
      <rect width="100%" height="100%" fill="url(#wallpaper)"/>
    </svg>
  </main>
  <form class="composer">
    <input class="question" type="text" placeholder="Ask Your Question..." aria-label="Ask Your Question">
    <button class="round send" type="button" aria-label="Send"><svg width="24" height="24" viewBox="0 0 24 24" fill="#fff"><path d="M2.010 21L23 12 2.010 3 2 10l15 2-15 2z"/></svg></button>
  </form>
</div>
</body>
</html>
```

FILE: styles.css
```css
* {
  box-sizing: border-box;
}

body {
  margin: 0;
  height: 100vh;
  padding: 3px 2px 1px 0;
  background:
    linear-gradient(#a8adad, #a8adad) right 15px top 0 / 9px 2px no-repeat,
    linear-gradient(#a8a8a8, #a8a8a8) right 0 top 51px / 3px 1px no-repeat,
    linear-gradient(#a8a8a8, #a8a8a8) right 0 top 94px / 3px 1px no-repeat,
    linear-gradient(#2f4241 17px, #d0d0ce 17px);
  font-family: "Liberation Sans", Arial, sans-serif;
}

.window {
  display: flex;
  flex-direction: column;
  height: 100%;
  border-top: 1px solid #0b1111;
  border-right: 1px solid #252525;
  border-bottom: 1px solid #252a30;
  border-radius: 12px 12px 0 0;
  background: #2f3b47;
  overflow: hidden;
}

.titlebar {
  display: grid;
  grid-template-columns: 1fr auto 1fr;
  align-items: center;
  height: 37px;
  flex: none;
  padding-right: 8px;
  border-top: 1px solid #303030;
  border-bottom: 1px solid #151515;
  background: #222;
}

.titlebar-name {
  grid-column: 2;
  padding-left: 8px;
  color: #fff;
  font: 700 14px/20px "Noto Sans", "Open Sans", sans-serif;
}

.titlebar-controls {
  display: flex;
  justify-content: flex-end;
  gap: 12px;
}

button {
  display: grid;
  place-items: center;
  flex: none;
  padding: 0;
  border: 0;
  border-radius: 50%;
}

.control {
  width: 22px;
  height: 22px;
  background: #373737;
}

.header {
  display: grid;
  grid-template-columns: 1fr auto 1fr;
  align-items: center;
  height: 63px;
  flex: none;
  background: #8081a7;
}

.round {
  width: 48px;
  height: 48px;
}

.back {
  background: #2f3b47;
}

.heading {
  margin: 0;
  color: #000;
  font: 600 26px/36px Inter, "Open Sans", sans-serif;
}

.chat {
  flex: 1;
  min-height: 0;
  background: #0b141b;
}

.doodles {
  display: block;
}

.composer {
  display: flex;
  align-items: center;
  gap: 64px;
  flex: none;
  padding: 8px 24px;
  background: #2f3b47;
}

.question {
  flex: 1;
  min-width: 0;
  height: 50px;
  padding: 0 16px;
  border: 0;
  border-radius: 25px;
  outline: 0;
  background: #3d595c;
  color: #fff;
  font: 20px "Liberation Sans", Arial, sans-serif;
}

.question::placeholder {
  color: #808282;
  opacity: 1;
}

.send {
  background: #ffa91a;
}
```
